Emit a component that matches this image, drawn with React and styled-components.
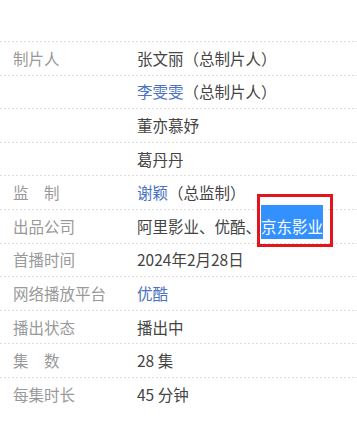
import React from "react";
import styled, { createGlobalStyle } from "styled-components";

const GlobalStyle = createGlobalStyle`
  html, body {
    margin: 0;
    padding: 0;
    background: #fff;
  }
  body {
    font-family: "Noto Sans CJK SC", "Noto Sans", sans-serif;
  }
`;

const InfoList = styled.div`
  width: 357px;
  padding-top: 41px;
  font-size: 15.5px;
`;

const Row = styled.div`
  display: flex;
  align-items: center;
  height: 33.6px;
  background-image: linear-gradient(to right, #dcdcdc 50%, transparent 50%);
  background-size: 4px 1px;
  background-repeat: repeat-x;
  background-position: left top;
`;

const Label = styled.div`
  width: 124px;
  padding-left: 13px;
  color: #999;
  line-height: 24px;
  white-space: nowrap;
`;

const Value = styled.div`
  flex: 1;
  color: #444;
  line-height: 24px;
  white-space: nowrap;
`;

const Link = styled.span`
  color: #4a72c2;
`;

const Marked = styled.span`
  position: relative;
  display: inline-block;
  z-index: 0;
  color: #fff;
  line-height: 24px;

  &::before {
    content: "";
    position: absolute;
    left: 0;
    right: 0;
    top: -9px;
    bottom: -1px;
    background: #3390ff;
    z-index: -1;
  }

  &::after {
    content: "";
    position: absolute;
    left: -4px;
    right: -10px;
    top: -20px;
    bottom: -9px;
    border: 3px solid #e3141b;
  }
`;

const rows = [
  { label: "制片人", value: "张文丽（总制片人）" },
  { label: "", value: <><Link>李雯雯</Link>（总制片人）</> },
  { label: "", value: "董亦慕妤" },
  { label: "", value: "葛丹丹" },
  { label: "监　制", value: <><Link>谢颖</Link>（总监制）</> },
  { label: "出品公司", value: <>阿里影业、优酷、<Marked>京东影业</Marked></> },
  { label: "首播时间", value: "2024年2月28日" },
  { label: "网络播放平台", value: <Link>优酷</Link> },
  { label: "播出状态", value: "播出中" },
  { label: "集　数", value: "28 集" },
  { label: "每集时长", value: "45 分钟" },
];

export default function App() {
  return (
    <>
      <GlobalStyle />
      <InfoList>
        {rows.map((r, i) => (
          <Row key={i}>
            <Label>{r.label}</Label>
            <Value>{r.value}</Value>
          </Row>
        ))}
      </InfoList>
    </>
  );
}
